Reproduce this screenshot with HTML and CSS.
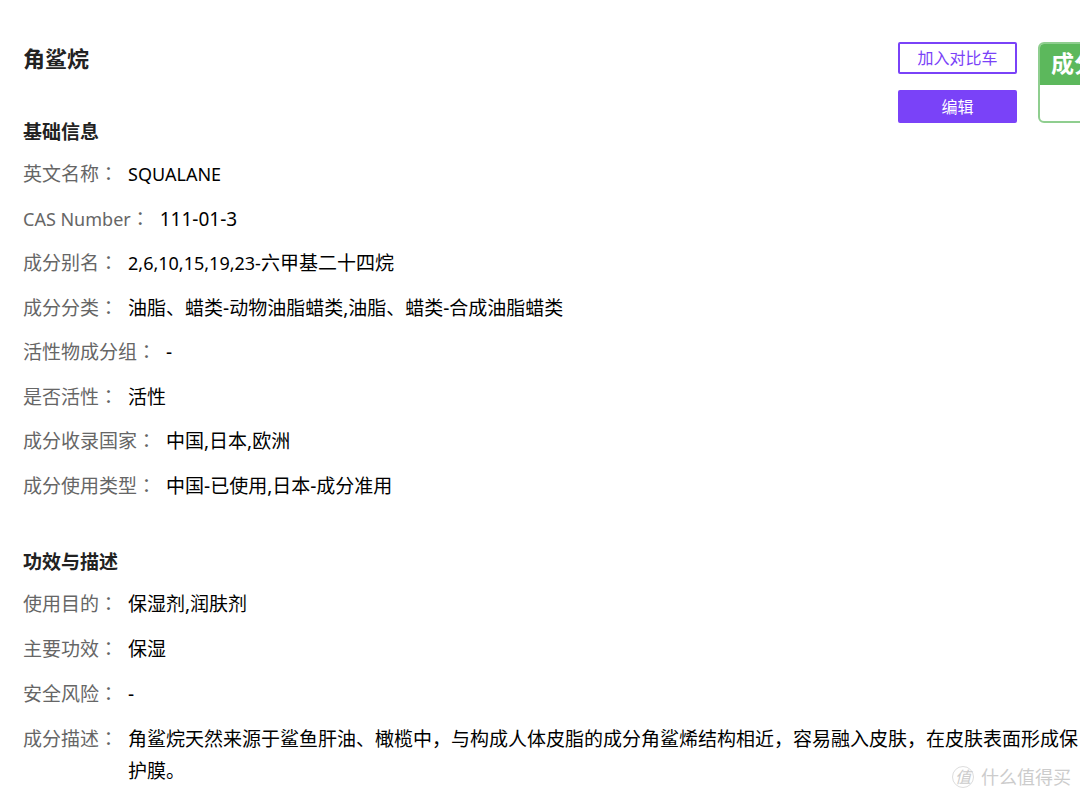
FILE: index.html
```
<!DOCTYPE html>
<html lang="zh-CN">
  <head>
    <meta charset="UTF-8">
    <meta name="viewport" content="width=device-width, initial-scale=1.0">
    <title>角鲨烷</title>
    <link rel="stylesheet" href="styles.css">
  </head>
  <body>
    <div class="page">
      <header class="header">
        <h1>角鲨烷</h1>
        <div class="actions">
          <button type="button" class="btn">加入对比车</button>
          <button type="button" class="btn btn-primary">编辑</button>
        </div>
        <div class="panel">
          <div class="panel-title">成分</div>
        </div>
      </header>

      <section>
        <h2>基础信息</h2>
        <dl class="info info-basic">
          <div class="row"><dt>英文名称<span class="colon" lang="zh-TW">：</span></dt><dd><span class="latin">SQUALANE</span></dd></div>
          <div class="row"><dt><span class="latin">CAS Number</span><span class="colon" lang="zh-TW">：</span></dt><dd>111-01-3</dd></div>
          <div class="row"><dt>成分别名<span class="colon" lang="zh-TW">：</span></dt><dd><span class="latin">2,6,10,15,19,23-</span>六甲基二十四烷</dd></div>
          <div class="row"><dt>成分分类<span class="colon" lang="zh-TW">：</span></dt><dd>油脂、蜡类-动物油脂蜡类,油脂、蜡类-合成油脂蜡类</dd></div>
          <div class="row"><dt>活性物成分组<span class="colon" lang="zh-TW">：</span></dt><dd>-</dd></div>
          <div class="row"><dt>是否活性<span class="colon" lang="zh-TW">：</span></dt><dd>活性</dd></div>
          <div class="row"><dt>成分收录国家<span class="colon" lang="zh-TW">：</span></dt><dd>中国,日本,欧洲</dd></div>
          <div class="row"><dt>成分使用类型<span class="colon" lang="zh-TW">：</span></dt><dd>中国-已使用,日本-成分准用</dd></div>
        </dl>
      </section>

      <section>
        <h2>功效与描述</h2>
        <dl class="info info-effect">
          <div class="row"><dt>使用目的<span class="colon" lang="zh-TW">：</span></dt><dd>保湿剂,润肤剂</dd></div>
          <div class="row"><dt>主要功效<span class="colon" lang="zh-TW">：</span></dt><dd>保湿</dd></div>
          <div class="row"><dt>安全风险<span class="colon" lang="zh-TW">：</span></dt><dd>-</dd></div>
          <div class="row"><dt>成分描述<span class="colon" lang="zh-TW">：</span></dt><dd>角鲨烷天然来源于鲨鱼肝油、橄榄中，与构成人体皮脂的成分角鲨烯结构相近，容易融入皮肤，在皮肤表面形成保护膜。</dd></div>
        </dl>
      </section>

      <div class="watermark"><span class="watermark-logo">值</span>什么值得买</div>
    </div>
  </body>
</html>
```
FILE: styles.css
```
* {
  box-sizing: border-box;
}

body {
  margin: 0;
  background-color: #fff;
  color: #000;
  font-family: "Noto Sans", "Noto Sans CJK SC", sans-serif;
  font-size: 19px;
}

.page {
  position: relative;
  padding: 42px 0 5px 23px;
  overflow: hidden;
}

/* The side panel runs past the right edge of the page */
.header {
  display: flex;
  align-items: flex-start;
  margin-right: -78px;
}

h1 {
  flex: 1;
  margin: 0;
  color: #222;
  font-size: 22px;
  line-height: 32px;
}

.actions {
  display: flex;
  flex-direction: column;
  gap: 16px;
  width: 119px;
  margin-right: 21px;
}

.btn {
  height: 32px;
  padding: 0;
  border: 2px solid #7a42f8;
  border-radius: 2px;
  background-color: #fff;
  color: #7a42f8;
  font-family: inherit;
  font-size: 16px;
  line-height: 26px;
}

.btn-primary {
  height: 33px;
  background-color: #7a42f8;
  color: #fff;
  line-height: 28px;
}

.panel {
  width: 120px;
  height: 81px;
  border: 2px solid #8fce8f;
  border-radius: 6px;
  overflow: hidden;
  background-color: #fff;
}

.panel-title {
  margin: -2px;
  padding-left: 13px;
  background-color: #5cb85c;
  color: #fff;
  font-size: 23px;
  font-weight: bold;
  line-height: 43px;
}

h2 {
  margin: 0 0 11px;
  color: #222;
  font-size: 19px;
  line-height: 18px;
}

section + section {
  margin-top: 45px;
}

.info {
  display: grid;
  margin: 0;
}

.info-basic {
  grid-auto-rows: 1fr;
  min-height: 356px;
}

.row {
  display: flex;
  align-items: flex-start;
  padding: 6px 0;
  line-height: 32px;
}

.info-effect .row {
  padding-bottom: 7px;
}

dt {
  flex: none;
  margin-right: 10px;
  color: #666;
}

dd {
  margin: 0;
}

.latin {
  font-size: 18px;
}

.colon {
  font-family: "Noto Sans CJK TC", sans-serif;
  line-height: 1;
}

.watermark {
  position: absolute;
  right: 9px;
  bottom: 10px;
  display: flex;
  align-items: center;
  gap: 7px;
  color: #ccc;
  font-size: 18px;
  line-height: 24px;
}

.watermark-logo {
  width: 22px;
  height: 22px;
  border: 1px solid #ddd;
  border-radius: 50%;
  font-size: 16px;
  font-style: italic;
  line-height: 20px;
  text-align: center;
}
```
